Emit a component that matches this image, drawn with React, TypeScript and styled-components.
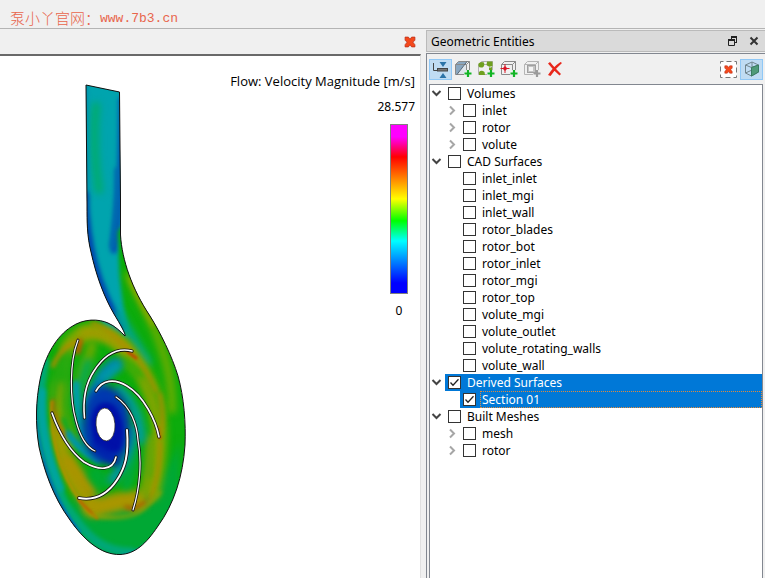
import React, { useState } from "react";
import styled, { createGlobalStyle } from "styled-components";

const GlobalStyle = createGlobalStyle`
  *, *::before, *::after { box-sizing: border-box; }
  body {
    margin: 0;
    background: #f0f0f0;
    color: #000;
    font-family: "Noto Sans", "Noto Sans CJK SC", sans-serif;
    font-size: 12px;
    line-height: 17px;
  }
  button, input { font: inherit; margin: 0; padding: 0; }
  ul { list-style: none; margin: 0; padding: 0; }
`;

const Page = styled.div`
  display: flex;
  flex-direction: column;
  height: 100vh;
  overflow: hidden;
`;

const Banner = styled.header`
  display: flex;
  align-items: center;
  flex: none;
  height: 29px;
  padding: 8px 10px 0;
  border-bottom: 1px solid #b4b4b4;
  color: #e8654c;
  font-size: 15px;
  font-weight: 300;
`;

const SiteLink = styled.a`
  color: inherit;
  text-decoration: none;
  font-family: "Liberation Mono", monospace;
  font-size: 13px;
`;

const Workspace = styled.main`
  display: grid;
  grid-template-columns: minmax(0, 1fr) 339px;
  column-gap: 5px;
  flex: 1;
  min-height: 0;
`;

const Viewer = styled.section`
  display: flex;
  flex-direction: column;
  min-width: 0;
  min-height: 0;
`;

const ViewerBar = styled.div`
  display: flex;
  align-items: center;
  justify-content: flex-end;
  flex: none;
  height: 25px;
  padding-right: 5px;
`;

const Canvas = styled.div`
  display: flex;
  justify-content: space-between;
  flex: 1;
  min-height: 0;
  overflow: hidden;
  background: #fff;
  border-top: 2px solid #696969;
  border-right: 1px solid #e0e0e0;
`;

const FieldPlot = styled.svg`
  flex: none;
  width: 200px;
  height: 522px;
`;

const Legend = styled.figure`
  display: flex;
  flex-direction: column;
  align-items: flex-end;
  margin: 0;
  padding: 17px 5px 0 0;
  white-space: nowrap;
`;

const LegendTitle = styled.figcaption`
  margin-bottom: 8px;
  font-family: "Open Sans", sans-serif;
  font-size: 13px;
`;

const ScaleMax = styled.div`
  margin-bottom: 9px;
`;

const Scale = styled.div`
  display: flex;
  flex-direction: column;
  align-items: center;
  gap: 8px;
  width: 32px;
`;

const ColourBar = styled.div`
  width: 18px;
  height: 170px;
  border: 1px solid #808080;
  background: linear-gradient(
    #f0f 0%, #f0f 7%, #f00 19%, #ff0 44%, #0f0 57%, #0ff 69%, #00f 94%, #00f 100%
  );
`;

const Dock = styled.aside`
  display: flex;
  flex-direction: column;
  min-height: 0;
  padding-top: 1px;
`;

const DockTitle = styled.div`
  display: flex;
  align-items: center;
  gap: 9px;
  flex: none;
  height: 22px;
  padding: 0 5px 0 4px;
  background: #dadada;
  border: 1px solid #bababa;
  border-right: 0;
`;

const Heading = styled.h2`
  flex: 1;
  margin: 0;
  font-size: 12px;
  font-weight: 400;
`;

const IconButton = styled.button`
  display: grid;
  place-items: center;
  width: 12px;
  height: 16px;
  border: 0;
  background: none;
`;

const DockBody = styled.div`
  display: flex;
  flex-direction: column;
  flex: 1;
  min-height: 0;
  margin-top: 1px;
  padding: 0 2px;
  border-top: 1px solid #828790;
  border-left: 1px solid #828790;
`;

const Toolbar = styled.div`
  display: flex;
  align-items: center;
  justify-content: space-between;
  flex: none;
  height: 30px;
`;

const ToolButton = styled.button<{ $active?: boolean }>`
  display: grid;
  place-items: center;
  width: 23px;
  height: 21px;
  border: 1px solid ${(p) => (p.$active ? "#90c8f6" : "transparent")};
  background: ${(p) => (p.$active ? "#c0dcf3" : "transparent")};
`;

const EditTools = styled.div`
  display: flex;
  ${ToolButton} + ${ToolButton} { padding-right: 2px; }
`;

const ViewTools = styled.div`
  display: flex;
`;

const TreeBox = styled.div`
  flex: 1;
  min-height: 0;
  overflow: hidden;
  background: #fff;
  border: 1px solid #828790;
  border-bottom: 0;
`;

const Row = styled.div<{ $depth: number; $selected?: boolean }>`
  display: flex;
  height: 17px;
  padding-left: ${(p) => p.$depth * 15}px;
  color: ${(p) => (p.$selected ? "#fff" : "#000")};
`;

const Expander = styled.button`
  display: grid;
  place-items: center;
  flex: none;
  width: 15px;
  height: 17px;
  padding-right: 2px;
  border: 0;
  background: none;
`;

const Blank = styled.span`
  flex: none;
  width: 15px;
`;

const Entry = styled.label<{ $selected?: boolean }>`
  display: flex;
  flex: 1;
  align-items: center;
  gap: 4px;
  padding-left: 3px;
  background: ${(p) => (p.$selected ? "#0078d7" : "transparent")};
`;

const Name = styled.span<{ $focused?: boolean }>`
  flex: 1;
  height: 17px;
  padding-left: 1px;
  line-height: 15px;
  border: 1px dotted ${(p) => (p.$focused ? "#e08a3c" : "transparent")};
`;

const Tick = styled.span`
  display: grid;
  flex: none;
  width: 13px;
  height: 13px;
  & > * { grid-area: 1 / 1; }
  svg { pointer-events: none; visibility: hidden; }
  input:checked + svg { visibility: visible; }
`;

const TickInput = styled.input`
  appearance: none;
  width: 13px;
  height: 13px;
  border: 1px solid #333;
  background: #fff;
`;

type Node = { name: string; checked?: boolean; selected?: boolean; focused?: boolean; expandable?: boolean; children?: Node[] };

const leaves = (...names: string[]): Node[] => names.map((name) => ({ name }));
const folded = (...names: string[]): Node[] => names.map((name) => ({ name, expandable: true }));

const entities: Node[] = [
  { name: "Volumes", children: folded("inlet", "rotor", "volute") },
  {
    name: "CAD Surfaces",
    children: leaves("inlet_inlet", "inlet_mgi", "inlet_wall", "rotor_blades", "rotor_bot", "rotor_inlet",
      "rotor_mgi", "rotor_top", "volute_mgi", "volute_outlet", "volute_rotating_walls", "volute_wall"),
  },
  {
    name: "Derived Surfaces", checked: true, selected: true,
    children: [{ name: "Section 01", checked: true, selected: true, focused: true }],
  },
  { name: "Built Meshes", children: folded("mesh", "rotor") },
];

function TreeItem({ node, depth }: { node: Node; depth: number }) {
  const [open, setOpen] = useState(!!node.children);
  return (
    <li>
      <Row $depth={depth} $selected={node.selected}>
        {node.children || node.expandable ? (
          <Expander type="button" aria-label={`Toggle ${node.name}`} aria-expanded={open} onClick={() => setOpen(!open)}>
            <svg width="11" height="11" viewBox="0 0 11 11" fill="none" strokeWidth="2">
              {open ? <path d="M1.5 3L5.5 7L9.5 3" stroke="#444" /> : <path d="M4 1.5L8 5.5L4 9.5" stroke="#a6a6a6" />}
            </svg>
          </Expander>
        ) : <Blank />}
        <Entry $selected={node.selected}>
          <Tick>
            <TickInput type="checkbox" defaultChecked={node.checked} />
            <svg width="13" height="13" viewBox="0 0 13 13"><path d="M2.5 6.5L5 9.2L10.5 3.3" fill="none" stroke="#222" strokeWidth="1.3" /></svg>
          </Tick>
          <Name $focused={node.focused}>{node.name}</Name>
        </Entry>
      </Row>
      {open && node.children && (
        <ul>{node.children.map((c) => <TreeItem key={c.name} node={c} depth={depth + 1} />)}</ul>
      )}
    </li>
  );
}

const Plus = ({ colour = "#12b525" }: { colour?: string }) => (
  <path d="M14 10V17M10.500 13.500H17.500" stroke={colour} strokeWidth="2.2" />
);

const Box = ({ colour = "#8a8a8a" }: { colour?: string }) => (
  <path d="M1.500 4.500L4.500 1.500H15.500V10M1.500 4.500V14.500H10M1.500 4.500H12.500V10M12.500 4.500L15.500 1.500" fill="none" stroke={colour} />
);

const CollapseIcon = () => (
  <svg width="17" height="17" viewBox="0 0 17 17">
    <path d="M1.500 2V9.500H6" fill="none" stroke="#444" />
    <rect x="5.500" y="7.500" width="10" height="2.500" fill="#777" stroke="#444" />
    <path d="M7.500 1H14.500L11 6ZM7.500 17H14.500L11 12Z" fill="#2d74a8" />
  </svg>
);

const SectionIcon = () => (
  <svg width="18" height="18" viewBox="0 0 18 18">
    <path d="M1.500 14.500V4.500L4.500 1.500H13L3 14.500Z" fill="#8aa7c0" />
    <path d="M3 14.500L12.500 2V11L10 14.500Z" fill="#dfe6ec" />
    <Box /><path d="M3 14.500L13 1.500" stroke="#567" />
    <Plus />
  </svg>
);

const IsoIcon = () => (
  <svg width="18" height="18" viewBox="0 0 18 18">
    <Box colour="#b0b0b0" />
    <path d="M1.500 3.500Q4 1 7 2.500Q8 6 5.500 7.500Q2 8 1.500 6ZM10 1.500H15.500V6Q12 7.500 9.500 5ZM2 12Q4.500 9.500 7.500 12L8 15H2ZM12 8L15 7V10H12Z" fill="#6fa01e" />
    <Plus />
  </svg>
);

const PointIcon = () => (
  <svg width="18" height="18" viewBox="0 0 18 18">
    <Box /><path d="M5 4V13M.5 8.500H9.500" stroke="#d81828" />
    <path d="M5 6L7.500 8.500L5 11L2.500 8.500Z" fill="#d81828" />
    <Plus />
  </svg>
);

const GroupIcon = () => (
  <svg width="18" height="18" viewBox="0 0 18 18">
    <Box colour="#b4b4b4" /><rect x="4.500" y="5.500" width="8" height="7" fill="#c4c4c4" stroke="#a0a0a0" />
    <rect x="6" y="7" width="4" height="4" fill="#f4f4f4" />
    <Plus colour="#9a9a9a" />
  </svg>
);

const DeleteIcon = () => (
  <svg width="16" height="16" viewBox="0 0 16 16">
    <path d="M1 2.500L3 1Q7 6 14 13L12.500 14.500Q6 9 1 2.500ZM13.500 1L15 2Q9 7 3.500 15L1 14Q6 6 13.500 1Z" fill="#e8271b" />
  </svg>
);

const CrossMark = () => (
  <path d="M1 1H4L5.500 3L7 1H10V4L8 5.500L10 8V10H7L5.500 8L4 10H1V8L3 5.500L1 4Z" fill="#f5491c" stroke="#b9301a" strokeWidth=".7" />
);

const ClearIcon = () => (
  <svg width="17" height="17" viewBox="0 0 17 17">
    <rect x=".5" y=".5" width="16" height="16" fill="#fff" stroke="#777" strokeDasharray="5 3" strokeDashoffset="2" />
    <svg x="4" y="4" width="9" height="9" viewBox="0 0 11 11"><CrossMark /></svg>
  </svg>
);

const CubeIcon = () => (
  <svg width="16" height="16" viewBox="0 0 16 16" fill="none" stroke="#71858e">
    <path d="M1.500 4L8 1L14.500 4V11L7.500 15L1.500 12ZM1.500 4L7.500 6.500L14.500 4M8 1V9L1.500 12M8 9L14.500 11" />
    <path d="M7.500 6.500L14.500 4V11L7.500 15Z" fill="#509b79" stroke="#397d61" />
  </svg>
);

const tools = [
  { label: "Collapse tree", icon: <CollapseIcon />, active: true },
  { label: "Add section", icon: <SectionIcon /> },
  { label: "Add isosurface", icon: <IsoIcon /> },
  { label: "Add point", icon: <PointIcon /> },
  { label: "Add group", icon: <GroupIcon /> },
  { label: "Delete", icon: <DeleteIcon /> },
];

const casing =
  "M86 85L119.500 92L120.500 200V235C122 260 132 289 150 316C160 332 172 356 178 376C184 397 186 424 185 445C183 476 174 504 158 526C146 544 135 554 120 554.500C101 555 84 540 70 520C53 497 44 470 39 447C35 423 36 400 40 380C45 355 57 336 71 327C84 318 99 319 108 323C115 326 120 331 125 336C126 334 120 324 114 314C104 297 96 275 91 252C87 236 87 222 87 205Z";

const blades = [
  { d: "M78 340C69 363 70 400 76 421C80 436 86 447 95 451", w: 1.2 },
  { d: "M132 351C116 347 103 357 94 371C84 386 83 403 84.500 418", w: 1.6 },
  { d: "M96 391C102 380 114 378 127 386C144 396 156 421 159 437", w: 1.6 },
  { d: "M116 397C131 407 137 425 138 440C142 461 140 488 133 510", w: 1.2 },
  { d: "M127 430C129 455 125 468 117 480C107 495 95 501 79 498", w: 2 },
  { d: "M52 413C61 438 72 453 84 462C99 471 113 471 116 457", w: 1.6 },
];

// Painted in order: broad areas, then thin streaks. w strokes the path, b is the blur level.
const flow: { d: string; c: string; w?: number; b: 1 | 2 | 4 }[] = [
  { d: "M80 460C95 515 150 520 180 440V570H60Z", c: "#00a834", b: 4 },
  { d: "M60 60H124V235C114 255 121 290 129 340L108 330C80 300 60 245 60 200Z", c: "#00a4ae", b: 2 },
  { d: "M96 106C93 135 95 165 99 190", c: "#00ac6c", w: 8, b: 4 },
  { d: "M122 100C121 160 121 200 114 250", c: "#0058b2", w: 7, b: 2 },
  { d: "M117 170C118 200 115 222 112 246", c: "#0068b0", w: 5, b: 2 },
  { d: "M85 85C86 130 86 180 87 200", c: "#0088ae", w: 4, b: 2 },
  { d: "M85 195C87 245 96 285 122 328", c: "#0044ae", w: 7, b: 2 },
  { d: "M124 233C125 265 140 300 160 335", c: "#08ac08", w: 12, b: 2 },
  { d: "M129 275C139 301 153 319 163 352C170 372 172 389 172 410", c: "#6cac00", w: 8, b: 4 },
  { d: "M131 280C138 297 144 308 153 324", c: "#80a800", w: 5, b: 2 },
  { d: "M119 315C127 329 134 342 147 362", c: "#00a690", w: 9, b: 4 },
  { d: "M68 348C80 330 94 328 112 337C130 350 142 367 153 394C161 418 161 451 152 492", c: "#84a800", w: 16, b: 4 },
  { d: "M84 334C100 330 116 340 128 352", c: "#a09c00", w: 10, b: 4 },
  { d: "M60 388C56 404 58 420 70 442", c: "#8ca400", w: 15, b: 4 },
  { d: "M57 430C62 458 72 484 92 506", c: "#a09c00", w: 15, b: 4 },
  { d: "M68 462C76 472 82 482 90 490", c: "#aa9400", w: 14, b: 4 },
  { d: "M92 508C108 506 124 498 138 500", c: "#a89600", w: 19, b: 4 },
  { d: "M64 360C56 372 54 390 50 412", c: "#28aa10", w: 8, b: 4 },
  { d: "M92 345C88 363 81 370 80 388", c: "#70a800", w: 9, b: 4 },
  { d: "M88 363L81 385L76 404", c: "#00aa50", w: 9, b: 4 },
  { d: "M68 352C66 375 65 400 67 424", c: "#30aa10", w: 7, b: 4 },
  { d: "M124 362C146 375 154 392 159 416", c: "#38ac08", w: 10, b: 4 },
  { d: "M144 380C150 392 154 404 158 418", c: "#90a200", w: 7, b: 4 },
  { d: "M96 474L101 482", c: "#00aa30", w: 16, b: 4 },
  { d: "M140 412C147 430 146 450 146 474", c: "#10aa20", w: 8, b: 4 },
  { d: "M150 438C150 460 147 480 142 496", c: "#8ea200", w: 6, b: 4 },
  { d: "M134 445C134 465 130 475 126 486", c: "#00a840", w: 9, b: 4 },
  { d: "M64 420C70 436 76 446 86 455", c: "#18aa20", w: 6, b: 2 },
  { d: "M116 364C103 370 96 386 90 403", c: "#0084b0", w: 12, b: 4 },
  { d: "M118 366L104 378", c: "#009cac", w: 7, b: 4 },
  { d: "M76 384C77 410 79 427 88 444", c: "#009cac", w: 7, b: 2 },
  { d: "M119 389C135 402 140 420 141 440", c: "#009cac", w: 8, b: 4 },
  { d: "M112 480C123 466 130 455 132 430", c: "#0094ac", w: 9, b: 4 },
  { d: "M68 434C77 446 87 455 98 460", c: "#0094ac", w: 7, b: 2 },
  { d: "M82 426C83 401 94 381 108 386C128 394 131 412 130 436C127 464 108 470 95 459C86 450 82 441 82 426Z", c: "#0038b0", b: 4 },
  { d: "M91 424C91 406 102 399 112 404C124 412 126 439 120 450C111 458 100 450 94 443Z", c: "#0010a8", b: 2 },
  { d: "M96 446C102 452 112 458 116 462", c: "#0020ac", w: 8, b: 4 },
  { d: "M45 362C36 400 40 450 64 502C85 537 102 552 131 552", c: "#00a878", w: 9, b: 2 },
  { d: "M42 392C40 420 46 454 60 488", c: "#00a4a0", w: 8, b: 2 },
  { d: "M35 390C34 440 50 495 80 532", c: "#0080b0", w: 3, b: 1 },
  { d: "M42 462C50 490 61 511 74 527", c: "#0050b0", w: 3, b: 1 },
  { d: "M122 555C134 553 140 550 146 544", c: "#00a0a0", w: 3, b: 1 },
  { d: "M52 402C50 416 54 446 62 466C68 484 78 500 92 514", c: "#a89400", w: 3, b: 1 },
  { d: "M53 400C53 412 57 422 64 436", c: "#b46400", w: 3, b: 2 },
  { d: "M80 341L78 352", c: "#bc5400", w: 5, b: 2 },
  { d: "M53 366C60 350 68 344 77 342", c: "#b08c00", w: 4, b: 2 },
  { d: "M92 323C108 328 119 340 131 352C142 362 150 377 156 391", c: "#b08c00", w: 3, b: 2 },
  { d: "M128 352L136 358", c: "#b85000", w: 3, b: 1 },
  { d: "M79 500C84 506 90 511 97 518", c: "#b46c00", w: 3, b: 1 },
  { d: "M126 507L134 509L145 503", c: "#b46000", w: 4, b: 2 },
  { d: "M158 428L160 438", c: "#b85400", w: 3, b: 1 },
  { d: "M161 435C163 424 163 409 160 394M149 502C157 484 160 464 160 442", c: "#ac8a00", w: 3, b: 2 },
  { d: "M92 515C109 519 127 518 137 513C145 507 153 503 160 492", c: "#a0a000", w: 3, b: 2 },
];

const region = { filterUnits: "userSpaceOnUse" as const, x: 0, y: 56, width: 200, height: 522 };

function PumpField() {
  return (
    <FieldPlot viewBox="0 56 200 522" role="img" aria-label="Velocity magnitude through the pump section">
      <defs>
        <clipPath id="casing"><path d={casing} /></clipPath>
        <filter id="blur1" colorInterpolationFilters="sRGB" {...region}><feGaussianBlur stdDeviation="1" /></filter>
        <filter id="blur2" colorInterpolationFilters="sRGB" {...region}><feGaussianBlur stdDeviation="2" /></filter>
        <filter id="blur4" colorInterpolationFilters="sRGB" {...region}><feGaussianBlur stdDeviation="3.500" /></filter>
      </defs>
      <g clipPath="url(#casing)">
        <path d={casing} fill="#0cac0c" />
        {flow.map((f) => (
          <path key={f.d} d={f.d} fill={f.w ? "none" : f.c} stroke={f.w ? f.c : "none"} strokeWidth={f.w}
            strokeLinecap="round" filter={`url(#blur${f.b})`} />
        ))}
      </g>
      <path d={casing} fill="none" stroke="#111" />
      {blades.map((b) => (
        <g key={b.d} fill="none" strokeLinecap="round">
          <path d={b.d} stroke="#111" strokeWidth={b.w + 1.6} />
          <path d={b.d} stroke="#fff" strokeWidth={b.w} />
        </g>
      ))}
      <ellipse cx="105.500" cy="424.500" rx="9.500" ry="16.500" fill="#fff" stroke="#222" strokeWidth=".7" transform="rotate(-4 105.500 424.500)" />
    </FieldPlot>
  );
}

export default function App() {
  return (
    <Page>
      <GlobalStyle />
      <Banner>泵小丫官网：<SiteLink href="#site">www.7b3.cn</SiteLink></Banner>
      <Workspace>
        <Viewer>
          <ViewerBar>
            <IconButton type="button" aria-label="Close view">
              <svg width="12" height="12" viewBox="0 0 11 11"><CrossMark /></svg>
            </IconButton>
          </ViewerBar>
          <Canvas>
            <PumpField />
            <Legend>
              <LegendTitle>Flow: Velocity Magnitude [m/s]</LegendTitle>
              <ScaleMax>28.577</ScaleMax>
              <Scale>
                <ColourBar />
                <div>0</div>
              </Scale>
            </Legend>
          </Canvas>
        </Viewer>
        <Dock>
          <DockTitle>
            <Heading>Geometric Entities</Heading>
            <IconButton type="button" aria-label="Float panel">
              <svg width="10" height="10" viewBox="0 0 10 10" fill="none" stroke="#222">
                <path d="M3 1.500H9M3.500 1V4M9 6.500H7M8.500 1V7M1 4.500H7M.5 4V9.500H6.500V4" /><path d="M3 1H9M0 4H7" strokeWidth="2" />
              </svg>
            </IconButton>
            <IconButton type="button" aria-label="Close panel">
              <svg width="10" height="10" viewBox="0 0 10 10"><path d="M1.500 1.500L8.500 8.500M8.500 1.500L1.500 8.500" stroke="#333" strokeWidth="2" /></svg>
            </IconButton>
          </DockTitle>
          <DockBody>
            <Toolbar>
              <EditTools>
                {tools.map((t) => (
                  <ToolButton key={t.label} type="button" aria-label={t.label} $active={t.active}>{t.icon}</ToolButton>
                ))}
              </EditTools>
              <ViewTools>
                <ToolButton type="button" aria-label="Clear selection"><ClearIcon /></ToolButton>
                <ToolButton type="button" aria-label="Show solid" $active><CubeIcon /></ToolButton>
              </ViewTools>
            </Toolbar>
            <TreeBox>
              <ul>{entities.map((n) => <TreeItem key={n.name} node={n} depth={0} />)}</ul>
            </TreeBox>
          </DockBody>
        </Dock>
      </Workspace>
    </Page>
  );
}
